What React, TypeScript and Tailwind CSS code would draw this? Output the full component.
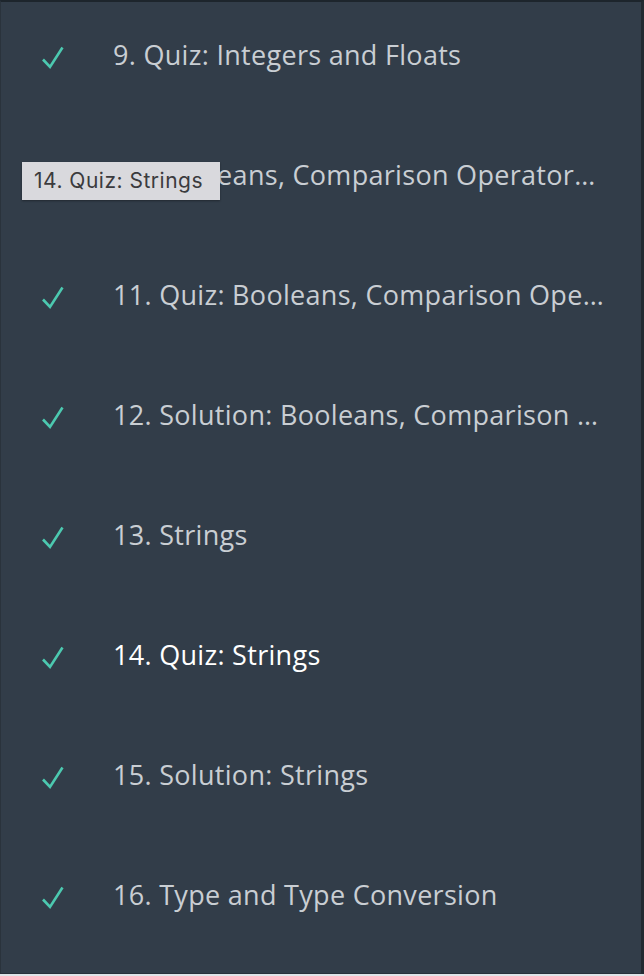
import React from "react";

const items = [
  "9. Quiz: Integers and Floats",
  "10. Booleans, Comparison Operators, and Logical Operators",
  "11. Quiz: Booleans, Comparison Operators",
  "12. Solution: Booleans, Comparison Operators",
  "13. Strings",
  "14. Quiz: Strings",
  "15. Solution: Strings",
  "16. Type and Type Conversion",
];

function Check() {
  return (
    <svg width="26" height="26" viewBox="0 0 26 26" className="shrink-0">
      <path d="M3 14.5 L10 22 L22.5 2.5" fill="none" stroke="#4cc9b0" strokeWidth="2.6" strokeLinecap="butt" strokeLinejoin="miter" />
    </svg>
  );
}

export default function App() {
  return (
    <div className="w-[644px] h-[976px] bg-[#dfe4e8] overflow-hidden">
      <div className="relative w-[644px] h-[974px] bg-[#323d49] border-t-2 border-t-[#1d252c] border-l border-l-[#2a333c] border-r-[3px] border-r-[#222a31] border-b border-b-[#28313a]">
        <ul className="flex flex-col">
          {items.map((t, i) => (
            <li key={i} className="h-[120px] flex items-center pl-[39px] pr-[34px] pb-[14px]">
              <div className="w-[73px] shrink-0 flex items-center pt-[5px]">
                <Check />
              </div>
              <span
                className={
                  "min-w-0 truncate text-[27px] font-['Open_Sans',sans-serif] tracking-[0.3px] " +
                  (i === 5 ? "text-white" : "text-[#c9ced3]")
                }
              >
                {t}
              </span>
            </li>
          ))}
        </ul>
        <div className="absolute left-[21px] top-[160px] w-[198px] h-[38px] bg-[#d9d9dd] shadow-[0_1px_2px_rgba(0,0,0,0.35)] flex items-center pl-[12px] text-[21px] text-[#3b3b3d] font-['Inter',sans-serif] tracking-[0.5px]">
          14. Quiz: Strings
        </div>
      </div>
    </div>
  );
}
